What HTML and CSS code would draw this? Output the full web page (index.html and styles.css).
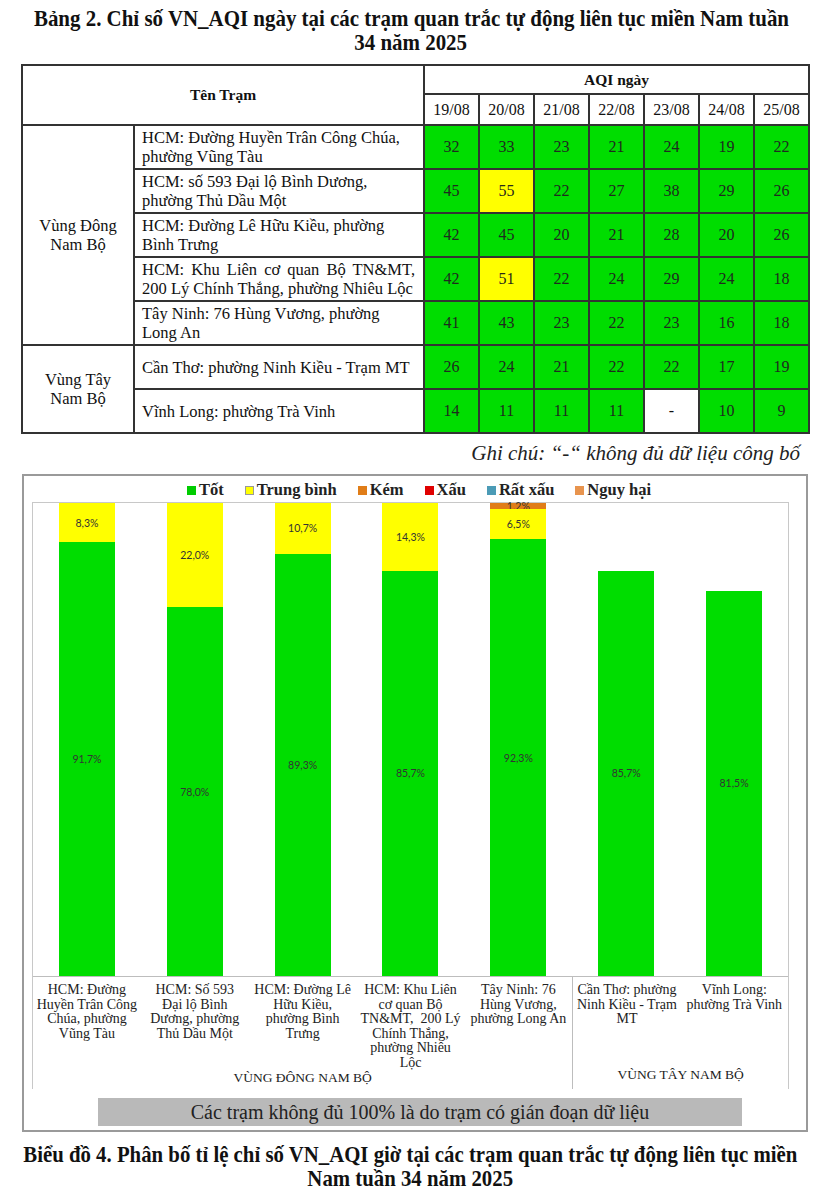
FILE: index.html
```html
<!DOCTYPE html>
<html lang="vi">
<head>
<meta charset="utf-8">
<link rel="stylesheet" href="styles.css">
</head>
<body>
<div class="page">
  <h1 class="title"><span class="cond">Bảng 2. Chỉ số VN_AQI ngày tại các trạm quan trắc tự động liên tục miền Nam tuần</span><span class="cond">34 năm 2025</span></h1>

  <table class="aqi">
    <colgroup>
      <col class="c-region"><col class="c-station">
      <col class="c-day"><col class="c-day"><col class="c-day"><col class="c-day"><col class="c-day"><col class="c-day"><col class="c-day">
    </colgroup>
    <tr class="h1">
      <th colspan="2" rowspan="2">Tên Trạm</th>
      <th colspan="7">AQI ngày</th>
    </tr>
    <tr class="h2">
      <td>19/08</td><td>20/08</td><td>21/08</td><td>22/08</td><td>23/08</td><td>24/08</td><td>25/08</td>
    </tr>
    <tr>
      <td class="region" rowspan="5">Vùng Đông<br>Nam Bộ</td>
      <td class="station">HCM: Đường Huyền Trân Công Chúa, phường Vũng Tàu</td>
      <td class="g">32</td><td class="g">33</td><td class="g">23</td><td class="g">21</td><td class="g">24</td><td class="g">19</td><td class="g">22</td>
    </tr>
    <tr>
      <td class="station">HCM: số 593 Đại lộ Bình Dương,<br>phường Thủ Dầu Một</td>
      <td class="g">45</td><td class="y">55</td><td class="g">22</td><td class="g">27</td><td class="g">38</td><td class="g">29</td><td class="g">26</td>
    </tr>
    <tr>
      <td class="station">HCM: Đường Lê Hữu Kiều, phường<br>Bình Trưng</td>
      <td class="g">42</td><td class="g">45</td><td class="g">20</td><td class="g">21</td><td class="g">28</td><td class="g">20</td><td class="g">26</td>
    </tr>
    <tr>
      <td class="station just">HCM: Khu Liên cơ quan Bộ TN&amp;MT, 200 Lý Chính Thắng, phường Nhiêu Lộc</td>
      <td class="g">42</td><td class="y">51</td><td class="g">22</td><td class="g">24</td><td class="g">29</td><td class="g">24</td><td class="g">18</td>
    </tr>
    <tr>
      <td class="station">Tây Ninh: 76 Hùng Vương, phường<br>Long An</td>
      <td class="g">41</td><td class="g">43</td><td class="g">23</td><td class="g">22</td><td class="g">23</td><td class="g">16</td><td class="g">18</td>
    </tr>
    <tr>
      <td class="region" rowspan="2">Vùng Tây<br>Nam Bộ</td>
      <td class="station">Cần Thơ: phường Ninh Kiều - Trạm MT</td>
      <td class="g">26</td><td class="g">24</td><td class="g">21</td><td class="g">22</td><td class="g">22</td><td class="g">17</td><td class="g">19</td>
    </tr>
    <tr>
      <td class="station">Vĩnh Long: phường Trà Vinh</td>
      <td class="g">14</td><td class="g">11</td><td class="g">11</td><td class="g">11</td><td class="w">-</td><td class="g">10</td><td class="g">9</td>
    </tr>
  </table>

  <p class="note">Ghi chú: “-“ không đủ dữ liệu công bố</p>

  <div class="chart">
    <div class="legend">
      <span class="lg"><i class="sw sw-tot"></i>Tốt</span>
      <span class="lg"><i class="sw sw-tb"></i>Trung bình</span>
      <span class="lg"><i class="sw sw-kem"></i>Kém</span>
      <span class="lg"><i class="sw sw-xau"></i>Xấu</span>
      <span class="lg"><i class="sw sw-rx"></i>Rất xấu</span>
      <span class="lg"><i class="sw sw-nh"></i>Nguy hại</span>
    </div>
    <div class="plot">
      <div class="bars">
        <div class="col"><div class="bar">
          <div class="seg s-tot" style="height:91.7%"><span>91,7%</span></div>
          <div class="seg s-tb" style="height:8.3%"><span>8,3%</span></div>
        </div></div>
        <div class="col"><div class="bar">
          <div class="seg s-tot" style="height:78%"><span>78,0%</span></div>
          <div class="seg s-tb" style="height:22%"><span>22,0%</span></div>
        </div></div>
        <div class="col"><div class="bar">
          <div class="seg s-tot" style="height:89.3%"><span>89,3%</span></div>
          <div class="seg s-tb" style="height:10.7%"><span>10,7%</span></div>
        </div></div>
        <div class="col"><div class="bar">
          <div class="seg s-tot" style="height:85.7%"><span>85,7%</span></div>
          <div class="seg s-tb" style="height:14.3%"><span>14,3%</span></div>
        </div></div>
        <div class="col"><div class="bar">
          <div class="seg s-tot" style="height:92.3%"><span>92,3%</span></div>
          <div class="seg s-tb" style="height:6.5%"><span>6,5%</span></div>
          <div class="seg s-kem" style="height:1.2%"><span>1,2%</span></div>
        </div></div>
        <div class="col"><div class="bar">
          <div class="seg s-tot" style="height:85.7%"><span>85,7%</span></div>
        </div></div>
        <div class="col"><div class="bar">
          <div class="seg s-tot" style="height:81.5%"><span>81,5%</span></div>
        </div></div>
      </div>
      <div class="axis">
        <div class="group g-east">
          <div class="cats">
            <div class="cat">HCM: Đường<br>Huyền Trân Công<br>Chúa, phường<br>Vũng Tàu</div>
            <div class="cat">HCM: Số 593<br>Đại lộ Bình<br>Dương, phường<br>Thủ Dầu Một</div>
            <div class="cat">HCM: Đường Lê<br>Hữu Kiều,<br>phường Bình<br>Trưng</div>
            <div class="cat">HCM: Khu Liên<br>cơ quan Bộ<br>TN&amp;MT,&nbsp; 200 Lý<br>Chính Thắng,<br>phường Nhiêu<br>Lộc</div>
            <div class="cat">Tây Ninh: 76<br>Hùng Vương,<br>phường Long An</div>
          </div>
          <div class="grp">VÙNG ĐÔNG NAM BỘ</div>
        </div>
        <div class="group g-west">
          <div class="cats">
            <div class="cat">Cần Thơ: phường<br>Ninh Kiều - Trạm<br>MT</div>
            <div class="cat">Vĩnh Long:<br>phường Trà Vinh</div>
          </div>
          <div class="grp">VÙNG TÂY NAM BỘ</div>
        </div>
      </div>
    </div>
    <div class="footnote">Các trạm không đủ 100% là do trạm có gián đoạn dữ liệu</div>
  </div>

  <h2 class="caption"><span class="cond">Biểu đồ 4. Phân bố tỉ lệ chỉ số VN_AQI giờ tại các trạm quan trắc tự động liên tục miền</span><span class="cond">Nam tuần 34 năm 2025</span></h2>
</div>
</body>
</html>
```

FILE: styles.css
```css
* { box-sizing: border-box; }
html, body { margin: 0; padding: 0; background: #fff; }
body {
  font-family: "Liberation Serif", "Times New Roman", serif;
  color: #111;
  width: 814px;
  overflow: hidden;
}
.page { width: 814px; }

.title, .caption {
  margin: 0;
  font-weight: bold;
  font-size: 23.25px;
  line-height: 24px;
  color: #111;
  display: flex;
  flex-direction: column;
  align-items: center;
}
.title { padding-top: 6px; height: 64px; padding-left: 8px; }
.cond {
  display: block;
  flex: none;
  transform: scaleX(0.9);
  transform-origin: center;
  white-space: nowrap;
}
.caption { font-size: 23.5px; padding-top: 10px; padding-left: 6px; }
.caption .cond { transform: scaleX(0.885); }

.aqi {
  margin-left: 21px;
  width: 788px;
  border-collapse: collapse;
  table-layout: fixed;
  border: 2px solid #333;
  font-size: 16px;
}
.c-region { width: 112px; }
.c-station { width: 290px; }
.c-day { width: 55px; }
.aqi th, .aqi td {
  border: 2px solid #333;
  padding: 0;
  text-align: center;
  vertical-align: middle;
}
.aqi th { font-weight: bold; font-size: 15.5px; }
.aqi tr.h1 th { height: 29px; }
.aqi tr.h2 td { height: 31px; font-size: 16px; }
.aqi td { height: 44px; }
.aqi td.region { font-size: 16.5px; line-height: 19px; }
.aqi td.station {
  text-align: left;
  padding: 0 8px 0 7px;
  line-height: 19px;
  font-size: 16.5px;
}
.aqi td.just { text-align: justify; text-align-last: left; }
.aqi td.g { background: #00dd00; color: #1f2a1f; }
.aqi td.y { background: #ffff00; color: #2a2a1a; }
.aqi td.w { background: #fff; }

.note {
  margin: 0;
  height: 40px;
  padding-right: 14px;
  padding-top: 7px;
  text-align: right;
  font-style: italic;
  font-size: 21px;
  line-height: 24px;
  color: #222;
}

.chart {
  margin-left: 22px;
  width: 786px;
  height: 658px;
  border: 2px solid #9a9a9a;
  padding: 0 17px 0 8px;
  display: flex;
  flex-direction: column;
}
.legend {
  height: 26px;
  display: flex;
  justify-content: center;
  align-items: center;
  gap: 21px;
  padding-left: 17px;
  padding-top: 2px;
  font-weight: bold;
  font-size: 16.5px;
  color: #222;
}
.lg { display: inline-flex; align-items: center; }
.sw { display: inline-block; width: 9px; height: 9px; margin-right: 3px; }
.sw-tot { background: #00cc00; }
.sw-tb { background: #ffff00; border: 1px solid #999; }
.sw-kem { background: #e07d18; }
.sw-xau { background: #e00000; }
.sw-rx { background: #4b9bb6; }
.sw-nh { background: #e8944e; }

.plot {
  width: 757px;
  border: 1px solid #c8c8c8;
  border-bottom: none;
  display: flex;
  flex-direction: column;
}
.bars {
  height: 474px;
  display: grid;
  grid-template-columns: repeat(7, 1fr);
  border-bottom: 1px solid #bdbdbd;
}
.col { display: flex; justify-content: center; }
.bar {
  width: 56px;
  height: 100%;
  display: flex;
  flex-direction: column-reverse;
}
.seg {
  flex: none;
  display: flex;
  align-items: center;
  justify-content: center;
  font-family: Lato, "Open Sans", sans-serif;
  font-size: 10.5px;
  color: #333;
  overflow: visible;
}
.seg span { white-space: nowrap; }
.s-tot { background: #00dd00; }
.s-tb { background: #ffff00; }
.s-kem { background: #e07d18; }

.axis {
  height: 112px;
  display: flex;
}
.group { display: flex; flex-direction: column; }
.g-east { width: calc(100% * 5 / 7); }
.g-west { width: calc(100% * 2 / 7); border-left: 1px solid #bdbdbd; }
.cats { flex: 1; display: flex; padding-top: 6px; }
.cat {
  flex: 1 1 0;
  min-width: 0;
  text-align: center;
  font-size: 14px;
  line-height: 14.5px;
  white-space: nowrap;
  display: flex;
  justify-content: center;
  color: #222;
}
.grp {
  height: 22px;
  text-align: center;
  font-size: 13.5px;
  color: #222;
}

.footnote {
  margin: 9px 0 0 66px;
  width: 644px;
  height: 28px;
  background: #b9b9b9;
  text-align: center;
  font-size: 20px;
  line-height: 28px;
  color: #222;
}
```
